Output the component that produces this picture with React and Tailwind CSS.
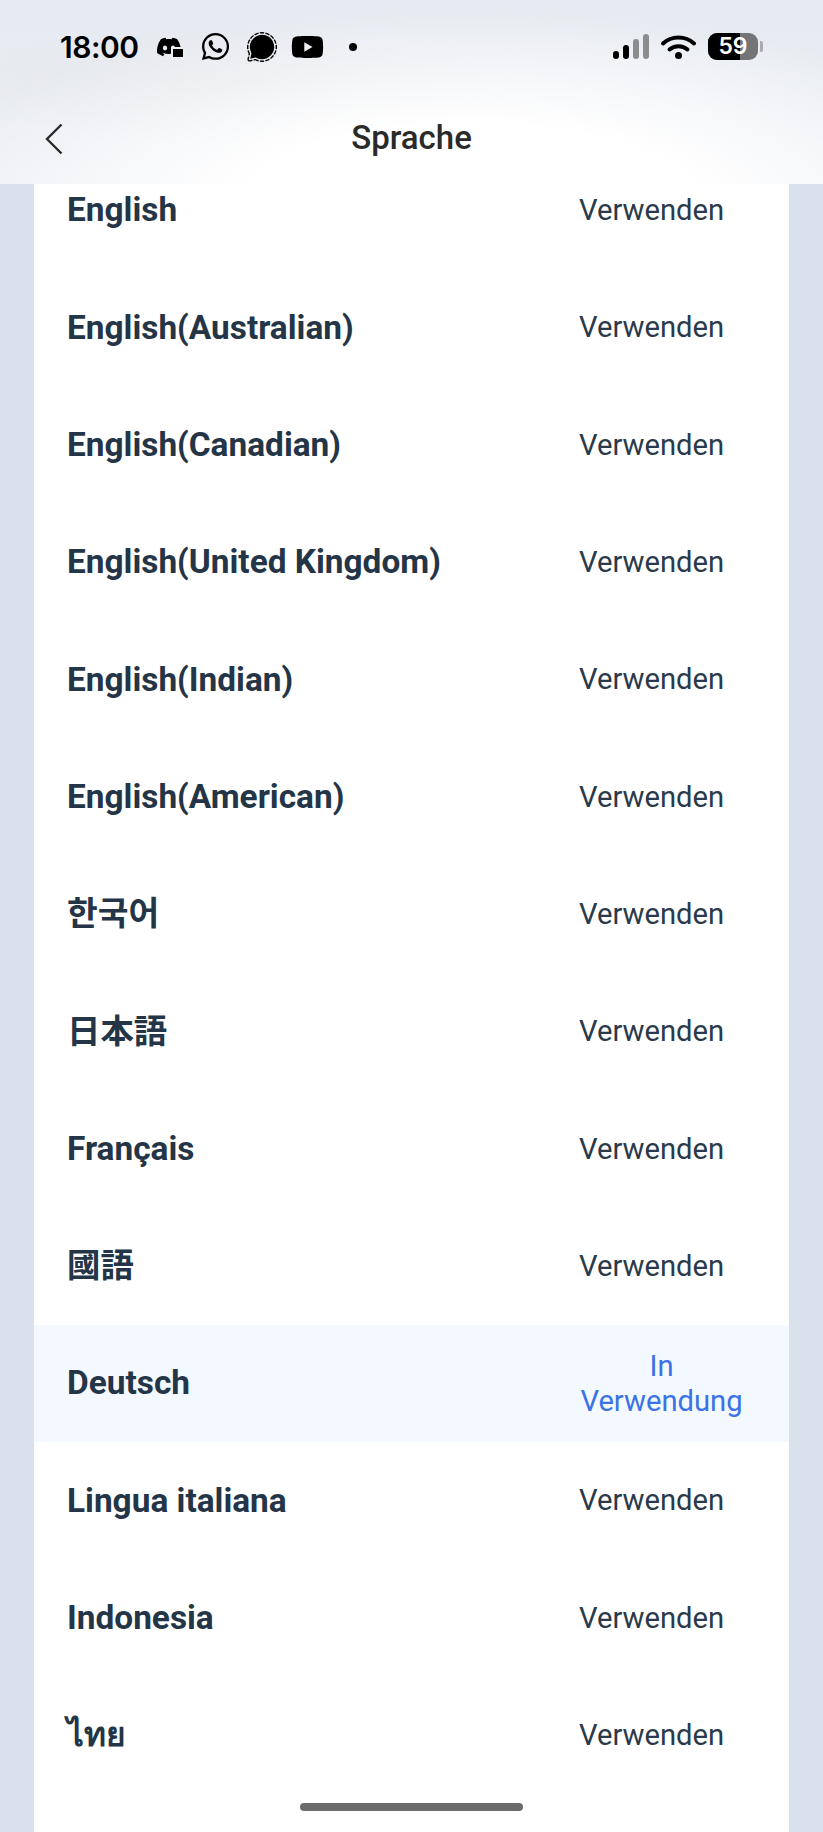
// src/App.jsx
import { FaWhatsapp, FaYoutube } from "react-icons/fa";
import { SiDiscord, SiSignal } from "react-icons/si";

const LANGUAGES = [
  "English",
  "English(Australian)",
  "English(Canadian)",
  "English(United Kingdom)",
  "English(Indian)",
  "English(American)",
  "한국어",
  "日本語",
  "Français",
  "國語",
  "Deutsch",
  "Lingua italiana",
  "Indonesia",
  "ไทย",
];

const ACTIVE = "Deutsch";

const StatusBar = () => (
  <div className="flex h-[92px] items-center pl-[60px] pr-[60px] pt-[1px] text-black">
    <span className="w-[97px] font-['Inter',sans-serif] text-[30px] font-semibold leading-none tracking-[-0.5px]">
      18:00
    </span>

    {/* Notification icons */}
    <div className="relative -ml-[1px] mr-[1px] h-[23px] w-[28px]">
      <SiDiscord className="h-[24px] w-[26px]" />
      <div className="absolute bottom-[-1px] right-[-1px] h-[12px] w-[14px] rounded-[2px] border-2 border-[#eceff4] bg-black" />
    </div>
    <FaWhatsapp className="ml-[15px] h-[31px] w-[31px]" />
    <SiSignal className="ml-[16px] h-[30px] w-[30px]" />
    <FaYoutube className="ml-[14px] h-[34px] w-[33px]" />
    <div className="ml-[25px] h-[8px] w-[8px] rounded-full bg-black" />

    {/* Signal, wifi, battery */}
    <div className="ml-auto flex items-center">
      <div className="flex h-[25px] items-end gap-[4px]">
        <div className="h-[8px] w-[6px] rounded-[3px] bg-black" />
        <div className="h-[14px] w-[6px] rounded-[3px] bg-black" />
        <div className="h-[20px] w-[6px] rounded-[3px] bg-[#8b8c8e]" />
        <div className="h-[25px] w-[6px] rounded-[3px] bg-[#8b8c8e]" />
      </div>
      <svg viewBox="0 0 35 25" className="ml-[12px] h-[25px] w-[35px]">
        <path d="M2 9.5C10.5 1.5 24.5 1.5 33 9.5" fill="none" stroke="black" strokeWidth="4" strokeLinecap="round" />
        <path d="M8.5 15.5C13.5 11 21.500 11 26.500 15.500" fill="none" stroke="black" strokeWidth="4" strokeLinecap="round" />
        <circle cx="17.500" cy="21.500" r="3.500" fill="black" />
      </svg>
      <div className="relative ml-[12px] flex h-[27px] w-[50px] items-center justify-center overflow-hidden rounded-[9px] bg-[#747577]">
        <div className="absolute inset-y-0 left-0 w-[32px] bg-black" />
        <span className="relative font-['Inter',sans-serif] text-[23px] font-semibold leading-none text-white">
          59
        </span>
      </div>
      <div className="ml-[2px] h-[11px] w-[3px] rounded-r-[2px] bg-[#a9abae]" />
    </div>
  </div>
);

const Header = () => (
  <header className="relative z-10 h-[184px] bg-[radial-gradient(ellipse_560px_190px_at_470px_200px,#ffffff_40%,rgba(255,255,255,0)_100%),radial-gradient(ellipse_300px_60px_at_230px_85px,#e5e7ea_0%,rgba(229,231,234,0)_100%),linear-gradient(180deg,#e6eaf1_0%,#eceff4_100%)]">
    <StatusBar />
    <div className="relative flex h-[92px] items-center justify-center pb-[2px]">
      <svg viewBox="0 0 18 32" className="absolute left-[45px] top-[31px] h-[32px] w-[18px]">
        <path d="M16.500 1.500L2 16L16.500 30.500" fill="none" stroke="#2b2b2b" strokeWidth="2.400" />
      </svg>
      <h1 className="font-['Roboto',sans-serif] text-[33px] font-medium leading-none text-[#2a2a2a]">
        Sprache
      </h1>
    </div>
  </header>
);

const LanguageRow = ({ name }) => {
  const isActive = name === ACTIVE;

  return (
    <div
      className={`flex h-[117.3px] items-center pl-[33px] ${isActive ? "bg-[#f4f8ff]" : "bg-white"}`}
    >
      <span className="-mt-[1px] flex-1 font-['Roboto','Noto_Sans_CJK_KR','Noto_Sans',sans-serif] text-[33.4px] font-bold leading-none text-[#243547]">
        {name}
      </span>
      <div className="w-[210px] pr-[44px]">
        {isActive ? (
          <span className="block pr-[1px] text-center font-['Roboto',sans-serif] text-[29.2px] leading-[35px] text-[#3b73e6]">
            In Verwendung
          </span>
        ) : (
          <span className="font-['Roboto',sans-serif] text-[29.2px] leading-[35px] text-[#2a3a4b]">
            Verwenden
          </span>
        )}
      </div>
    </div>
  );
};

const App = () => {
  return (
    <div className="relative h-[1832px] w-[823px] overflow-hidden bg-[#d9e1ec]">
      <Header />

      {/* List starts under the header */}
      <main className="mx-[34px] -mt-[32px] h-[1680px] bg-white">
        {LANGUAGES.map((name) => (
          <LanguageRow key={name} name={name} />
        ))}
      </main>

      {/* Home indicator */}
      <div className="absolute bottom-[21px] left-[300px] h-[8px] w-[223px] rounded-full bg-[#6b6b6b]" />
    </div>
  );
};

export default App;
